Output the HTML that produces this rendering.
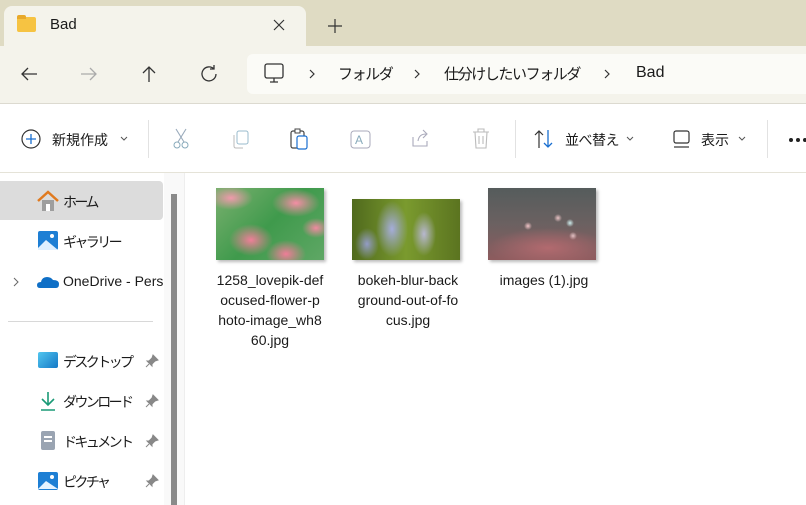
<!DOCTYPE html>
<html><head><meta charset="utf-8"><style>
*{margin:0;padding:0;box-sizing:border-box}
body{width:806px;height:505px;overflow:hidden;background:#fff;font-family:"Liberation Sans","Noto Sans CJK JP",sans-serif;color:#1a1a1a;position:relative}
.abs{position:absolute}
.t{font-size:14px;white-space:nowrap}
.j{font-size:14px;letter-spacing:-2.6px}
.b{font-size:15px;letter-spacing:-1.4px}
svg{position:absolute;overflow:visible}
</style></head><body>
<div class="abs" style="left:0;top:0;width:806px;height:46px;background:#dfdbc3"></div>
<div class="abs" style="left:4px;top:6px;width:302px;height:42px;background:#f4f3eb;border-radius:8px 8px 0 0"></div>
<div class="abs" style="left:17px;top:17px;width:19px;height:15px;background:#f6c342;border-radius:2px"></div>
<div class="abs" style="left:17px;top:15px;width:9px;height:4px;background:#e8a92a;border-radius:2px 2px 0 0"></div>
<div class="abs t" style="left:50px;top:16px;font-size:15px">Bad</div>
<svg style="left:273px;top:19px" width="12" height="12"><path d="M1 1L11 11M11 1L1 11" stroke="#333" stroke-width="1.2"/></svg>
<svg style="left:328px;top:19px" width="14" height="14"><path d="M7 0V14M0 7H14" stroke="#333" stroke-width="1.2"/></svg>
<div class="abs" style="left:0;top:46px;width:806px;height:58px;background:#f4f3eb;border-bottom:1px solid #dcdad0"></div>
<svg style="left:20px;top:66px" width="18" height="16"><path d="M17 8H2M8 2L2 8L8 14" stroke="#333" stroke-width="1.3" fill="none"/></svg>
<svg style="left:80px;top:66px" width="18" height="16"><path d="M1 8H16M10 2L16 8L10 14" stroke="#aaa" stroke-width="1.3" fill="none"/></svg>
<svg style="left:140px;top:65px" width="18" height="18"><path d="M9 17V2M3 8L9 2L15 8" stroke="#333" stroke-width="1.3" fill="none"/></svg>
<svg style="left:200px;top:65px" width="18" height="18"><path d="M14 4A7 7 0 1 0 16 9M14 0V4H10" stroke="#333" stroke-width="1.3" fill="none"/></svg>
<div class="abs" style="left:247px;top:54px;width:570px;height:40px;background:#fbfbf7;border-radius:6px"></div>
<svg style="left:264px;top:63px" width="20" height="22"><rect x="1" y="1" width="18" height="14" rx="2" stroke="#333" stroke-width="1.3" fill="none"/><path d="M6 19H14M10 15V19" stroke="#333" stroke-width="1.3"/></svg>
<svg style="left:309px;top:69px" width="6" height="10"><path d="M1 1L5 5L1 9" stroke="#333" stroke-width="1.2" fill="none"/></svg>
<div class="abs t b" style="left:338px;top:63px">フォルダ</div>
<svg style="left:414px;top:69px" width="6" height="10"><path d="M1 1L5 5L1 9" stroke="#333" stroke-width="1.2" fill="none"/></svg>
<div class="abs t b" style="left:444px;top:63px">仕分けしたいフォルダ</div>
<svg style="left:604px;top:69px" width="6" height="10"><path d="M1 1L5 5L1 9" stroke="#333" stroke-width="1.2" fill="none"/></svg>
<div class="abs t" style="left:636px;top:64px;font-size:16px">Bad</div>
<svg style="left:21px;top:129px" width="20" height="20"><circle cx="10" cy="10" r="9" stroke="#333" stroke-width="1.2" fill="none"/><path d="M10 5V15M5 10H15" stroke="#1a6fd0" stroke-width="1.3"/></svg>
<div class="abs t" style="left:52px;top:130px;letter-spacing:0">新規作成</div>
<svg style="left:120px;top:136px" width="8" height="5"><path d="M1 1L4 4L7 1" stroke="#555" fill="none"/></svg>
<div class="abs" style="left:148px;top:120px;width:1px;height:38px;background:#e2e2e2"></div>
<svg style="left:172px;top:128px" width="18" height="22"><path d="M4 1L12 14M14 1L6 14" stroke="#9ab" stroke-width="1.1"/><circle cx="5" cy="17" r="3" stroke="#8ab" fill="none"/><circle cx="13" cy="17" r="3" stroke="#8ab" fill="none"/></svg>
<svg style="left:231px;top:130px" width="20" height="20"><rect x="6" y="1" width="11" height="13" rx="2" stroke="#9bc" fill="none"/><path d="M3 5V16Q3 18 5 18H12" stroke="#bbb" fill="none"/></svg>
<svg style="left:290px;top:128px" width="20" height="22"><rect x="1" y="3" width="13" height="17" rx="2" stroke="#444" fill="none" stroke-width="1.2"/><rect x="5" y="1" width="5" height="4" stroke="#444" fill="#fff"/><rect x="7" y="8" width="10" height="13" rx="2" stroke="#1a6fd0" fill="#fff" stroke-width="1.2"/></svg>
<svg style="left:350px;top:129px" width="22" height="22"><rect x="1" y="2" width="19" height="17" rx="3" stroke="#aab" fill="none"/><text x="5" y="15" font-size="12" fill="#8ab" font-family="Liberation Sans">A</text></svg>
<svg style="left:411px;top:129px" width="20" height="20"><path d="M2 8V17H16V12M7 12Q8 5 15 5M12 1L16 5L12 9" stroke="#aab" fill="none" stroke-width="1.1"/></svg>
<svg style="left:472px;top:128px" width="18" height="22"><path d="M1 4H17M6 4V1H12V4M3 4L4 20H14L15 4M7 8V16M11 8V16" stroke="#bbb" fill="none" stroke-width="1.1"/></svg>
<div class="abs" style="left:515px;top:120px;width:1px;height:38px;background:#e2e2e2"></div>
<svg style="left:534px;top:129px" width="20" height="20"><path d="M5 19V2M1 6L5 2L9 6" stroke="#333" stroke-width="1.2" fill="none"/><path d="M14 1V18M10 14L14 18L18 14" stroke="#1a6fd0" stroke-width="1.3" fill="none"/></svg>
<div class="abs t" style="left:565px;top:130px;letter-spacing:-0.5px">並べ替え</div>
<svg style="left:626px;top:136px" width="8" height="5"><path d="M1 1L4 4L7 1" stroke="#555" fill="none"/></svg>
<svg style="left:673px;top:130px" width="18" height="18"><rect x="1" y="1" width="15" height="12" rx="2" stroke="#333" stroke-width="1.2" fill="none"/><path d="M1 17H16" stroke="#333" stroke-width="1.2"/></svg>
<div class="abs t" style="left:701px;top:130px">表示</div>
<svg style="left:738px;top:136px" width="8" height="5"><path d="M1 1L4 4L7 1" stroke="#555" fill="none"/></svg>
<div class="abs" style="left:767px;top:120px;width:1px;height:38px;background:#e2e2e2"></div>
<div class="abs" style="left:789px;top:138px;width:4px;height:4px;border-radius:2px;background:#222"></div>
<div class="abs" style="left:796px;top:138px;width:4px;height:4px;border-radius:2px;background:#222"></div>
<div class="abs" style="left:803px;top:138px;width:4px;height:4px;border-radius:2px;background:#222"></div>
<div class="abs" style="left:0;top:172px;width:806px;height:1px;background:#e5e3d8"></div>
<div class="abs" style="left:0;top:181px;width:163px;height:39px;background:#dcdcdc;border-radius:0 4px 4px 0"></div>
<svg style="left:37px;top:191px" width="22" height="20"><path d="M1 10L11 1L21 10" stroke="#e07a1f" stroke-width="2.5" fill="none"/><path d="M5 9V20H17V9" fill="#9e9e9e"/><rect x="9" y="13" width="4" height="7" fill="#fff"/></svg>
<div class="abs t j" style="left:63px;top:192px">ホーム</div>
<svg style="left:38px;top:231px" width="20" height="20"><rect x="0" y="0" width="20" height="19" rx="2" fill="#1e7fd4"/><path d="M0 17L8 9L20 19H0Z" fill="#dff0ff"/><circle cx="14" cy="5" r="2" fill="#fff"/></svg>
<div class="abs t j" style="left:63px;top:232px">ギャラリー</div>
<svg style="left:13px;top:277px" width="6" height="10"><path d="M1 1L5 5L1 9" stroke="#666" fill="none"/></svg>
<svg style="left:37px;top:274px" width="22" height="14"><path d="M3 14Q0 14 0 11Q0 8 4 8Q5 3 10 3Q14 3 16 6Q22 6 22 10Q22 14 19 14Z" fill="#0f6fc6"/></svg>
<div class="abs t" style="left:63px;top:273px">OneDrive - Pers</div>
<div class="abs" style="left:8px;top:321px;width:145px;height:1px;background:#d8d8d8"></div>
<div class="abs" style="left:38px;top:352px;width:20px;height:16px;background:linear-gradient(135deg,#52c6ef,#1478c6);border-radius:2px"></div>
<div class="abs t j" style="left:63px;top:352px">デスクトップ</div>
<svg style="left:40px;top:391px" width="16" height="20"><path d="M8 1V14M2 8L8 14L14 8M1 19H15" stroke="#1a9a76" stroke-width="1.6" fill="none"/></svg>
<div class="abs t j" style="left:63px;top:392px">ダウンロード</div>
<div class="abs" style="left:41px;top:431px;width:14px;height:19px;background:#9aa4b2;border-radius:2px"></div>
<div class="abs" style="left:44px;top:436px;width:8px;height:6px;border-top:2px solid #fff;border-bottom:2px solid #fff"></div>
<div class="abs t j" style="left:63px;top:432px">ドキュメント</div>
<svg style="left:38px;top:472px" width="20" height="18"><rect x="0" y="0" width="20" height="18" rx="2" fill="#1e7fd4"/><path d="M0 17L8 9L20 17Z" fill="#e5f3ff"/><circle cx="14" cy="5" r="2" fill="#fff"/></svg>
<div class="abs t j" style="left:63px;top:472px">ピクチャ</div>
<svg style="left:145px;top:354px" width="14" height="14"><path d="M8 1L13 6L10 7L7 10L7 12L2 7L4 7L7 4Z M4 10L1 13" fill="#888" stroke="#888"/></svg>
<svg style="left:145px;top:394px" width="14" height="14"><path d="M8 1L13 6L10 7L7 10L7 12L2 7L4 7L7 4Z M4 10L1 13" fill="#888" stroke="#888"/></svg>
<svg style="left:145px;top:434px" width="14" height="14"><path d="M8 1L13 6L10 7L7 10L7 12L2 7L4 7L7 4Z M4 10L1 13" fill="#888" stroke="#888"/></svg>
<svg style="left:145px;top:474px" width="14" height="14"><path d="M8 1L13 6L10 7L7 10L7 12L2 7L4 7L7 4Z M4 10L1 13" fill="#888" stroke="#888"/></svg>
<div class="abs" style="left:164px;top:173px;width:20px;height:332px;background:#f9f9f9"></div>
<div class="abs" style="left:171px;top:194px;width:6px;height:311px;background:#8a8a8a"></div>
<div class="abs" style="left:184px;top:173px;width:1px;height:332px;background:#eee"></div>
<div class="abs" style="left:216px;top:188px;width:108px;height:72px;box-shadow:2px 2px 3px #bbb;background:
radial-gradient(ellipse 22px 16px at 35px 52px,#f07f99,transparent),
radial-gradient(ellipse 24px 14px at 80px 15px,#f48ea5,transparent),
radial-gradient(ellipse 20px 14px at 70px 66px,#ef7d98,transparent),
radial-gradient(ellipse 22px 12px at 15px 10px,#f09aac,transparent),
radial-gradient(ellipse 14px 10px at 100px 40px,#f08aa0,transparent),
linear-gradient(135deg,#7bb06f,#3f9a4c 50%,#5fa765)"></div>
<div class="abs" style="left:352px;top:199px;width:108px;height:61px;box-shadow:2px 2px 3px #bbb;background:
radial-gradient(ellipse 16px 28px at 40px 30px,#a5addb,transparent),
radial-gradient(ellipse 12px 22px at 72px 35px,#b8b8d0,transparent),
radial-gradient(ellipse 12px 16px at 15px 45px,#939cc6,transparent),
linear-gradient(90deg,#506a1d,#7a9a2e 50%,#5b7420)"></div>
<div class="abs" style="left:488px;top:188px;width:108px;height:72px;box-shadow:2px 2px 3px #bbb;background:
radial-gradient(ellipse 60px 20px at 60px 60px,#b26a6f,transparent),
radial-gradient(circle 4px at 40px 38px,#f2c5c8,transparent),
radial-gradient(circle 4px at 70px 30px,#e9c3c5,transparent),
radial-gradient(circle 4px at 85px 48px,#f6e0e2,transparent),
radial-gradient(circle 4px at 82px 35px,#cfeeee,transparent),
linear-gradient(180deg,#555c5c,#6b6161 50%,#8d5b5e)"></div>
<div class="abs" style="left:210px;top:270px;width:120px;text-align:center;font-size:14px;line-height:20px">1258_lovepik-def<br>ocused-flower-p<br>hoto-image_wh8<br>60.jpg</div>
<div class="abs" style="left:346px;top:270px;width:124px;text-align:center;font-size:14px;line-height:20px">bokeh-blur-back<br>ground-out-of-fo<br>cus.jpg</div>
<div class="abs" style="left:482px;top:270px;width:124px;text-align:center;font-size:14px;line-height:20px">images (1).jpg</div>
</body></html>
